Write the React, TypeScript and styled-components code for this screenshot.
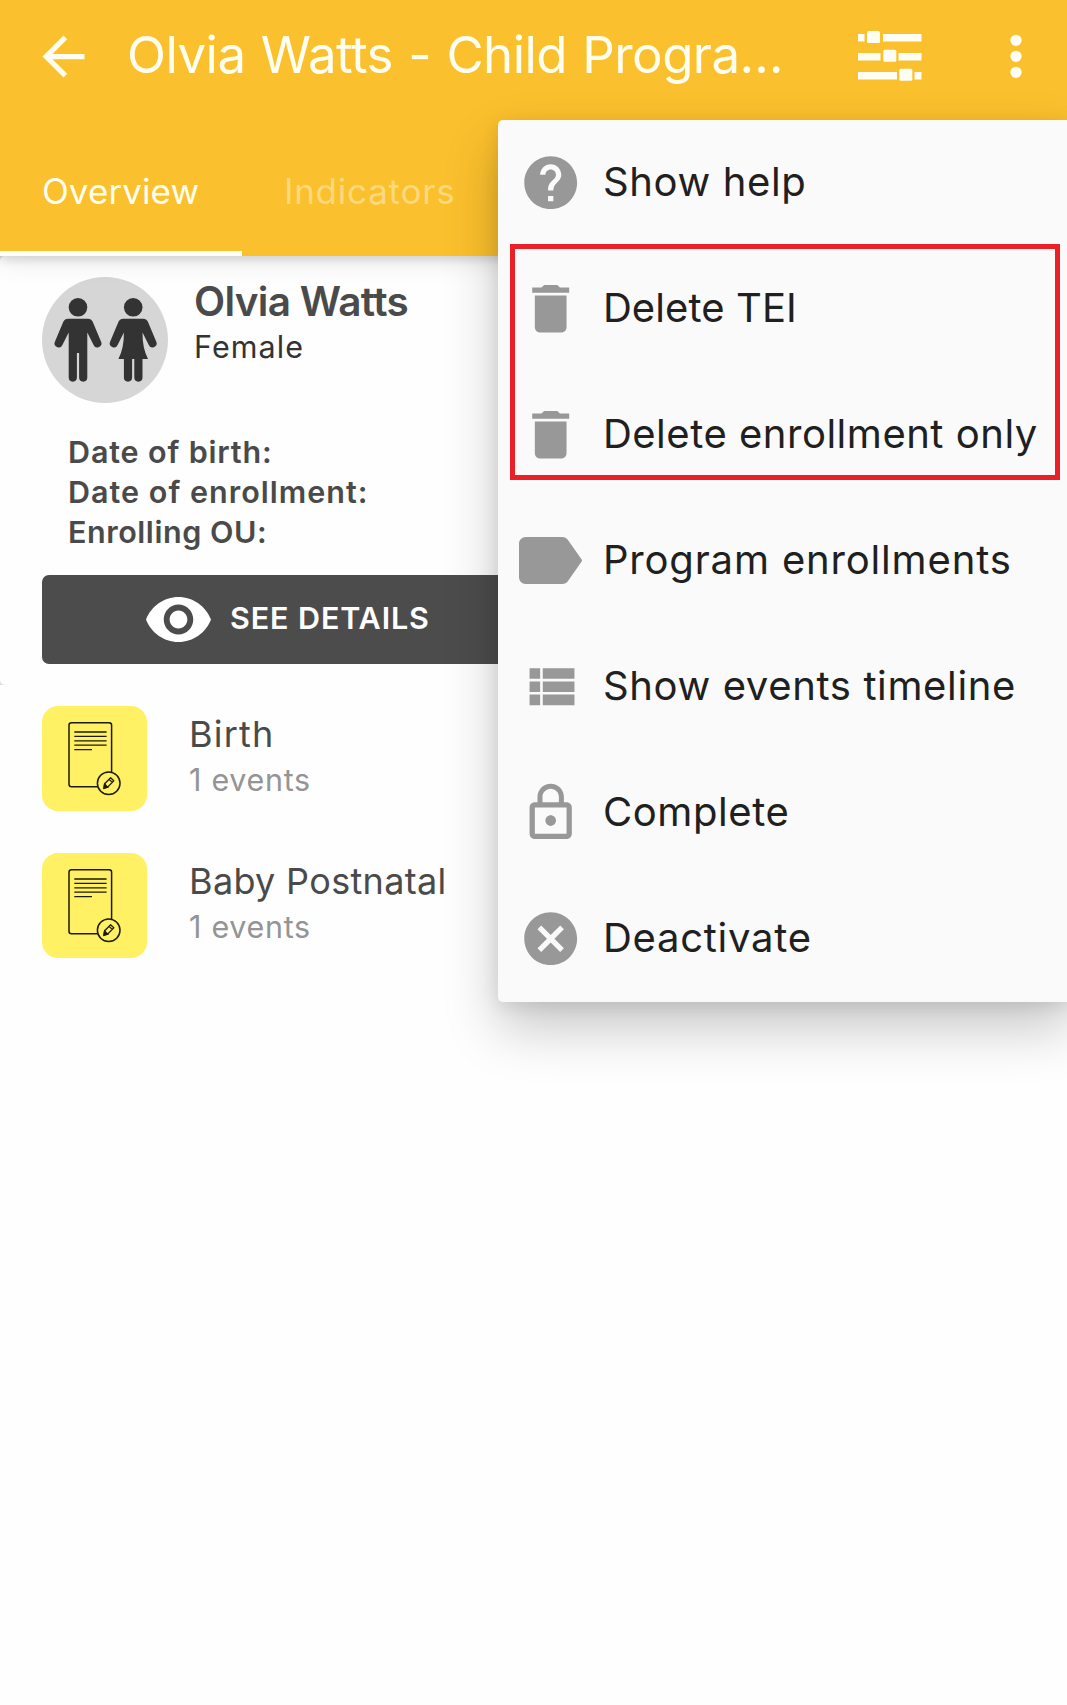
import React from 'react';
import styled, { createGlobalStyle, css } from 'styled-components';

const GlobalStyle = createGlobalStyle`
  *, *::before, *::after { box-sizing: border-box; }
  body {
    margin: 0;
    background: #fefefe;
    font-family: Inter, Roboto, 'Liberation Sans', sans-serif;
    overflow: hidden;
  }
`;

const Screen = styled.div`
  position: relative;
  display: flex;
  flex-direction: column;
  width: 1067px;
  height: 1705px;
  overflow: hidden;
  background: #fefefe;
`;

const Label = styled.span<{ $track?: number }>`
  letter-spacing: ${({ $track = 0 }) => $track}px;
  white-space: nowrap;
`;

/* ---------- header ---------- */

const Header = styled.header`
  position: relative;
  z-index: 1;
  flex: none;
  height: 256px;
  display: flex;
  flex-direction: column;
  background: #fbc02d;
  color: #fffef0;
  box-shadow: 0 4px 9px rgba(0, 0, 0, 0.13), 0 8px 24px rgba(0, 0, 0, 0.07);
`;

const Toolbar = styled.div`
  display: flex;
  align-items: center;
  height: 112px;
  padding: 0 19px 0 31px;
`;

const IconButton = styled.button<{ $spaceBefore?: number }>`
  display: flex;
  align-items: center;
  justify-content: center;
  flex: none;
  width: 64px;
  height: 64px;
  margin-left: ${({ $spaceBefore = 0 }) => $spaceBefore}px;
  padding: 0;
  border: 0;
  background: none;
  color: inherit;
`;

const Title = styled.h1`
  flex: 1;
  margin: 0;
  padding: 0 0 3px 32px;
  font-size: 51px;
  font-weight: 400;
  line-height: 64px;
  word-spacing: 1.5px;
`;

const TabBar = styled.nav`
  display: flex;
  flex: 1;
`;

const Tab = styled.div<{ $active?: boolean }>`
  display: flex;
  align-items: center;
  height: 144px;
  padding: 13px 43px 0 42px;
  font-size: 35px;
  line-height: 44px;
  color: rgba(255, 254, 240, 0.42);
  ${({ $active }) =>
    $active &&
    css`
      width: 242px;
      color: #fffef0;
      border-bottom: 5px solid #fffffa;
      padding-top: 18px;
    `}
`;

/* ---------- person card ---------- */

const CardBackdrop = styled.div`
  flex: none;
  background: #dcdcdc;
`;

const Card = styled.section`
  height: 429px;
  padding: 21px 42px 0;
  border-radius: 5px;
  background: #fefefe;
`;

const Person = styled.div`
  display: flex;
  gap: 26px;
  height: 155px;
`;

const Avatar = styled.svg`
  flex: none;
  width: 126px;
  height: 126px;
  border-radius: 50%;
  background: #d6d6d6;
`;

const PersonText = styled.div`
  display: flex;
  flex-direction: column;
`;

const Name = styled.div`
  padding-top: 1px;
  color: #4a4a4a;
  font-size: 40.5px;
  font-weight: 600;
  line-height: 48px;
`;

const Gender = styled.div`
  color: #333;
  font-size: 30.5px;
  line-height: 41px;
`;

const Facts = styled.div`
  display: flex;
  flex-direction: column;
  padding-left: 26px;
  height: 143px;
  color: #4a4a4a;
  font-size: 30.5px;
  font-weight: 600;
  line-height: 40px;
`;

const DetailsButton = styled.button`
  display: flex;
  align-items: center;
  gap: 19px;
  width: 100%;
  height: 89px;
  padding: 0 0 0 104px;
  border: 0;
  border-radius: 7px;
  background: #4c4c4c;
  color: #fff;
  font: 600 30.5px/40px Inter, Roboto, 'Liberation Sans', sans-serif;

  svg {
    flex: none;
  }
  span {
    padding-bottom: 4px;
  }
`;

/* ---------- stage list ---------- */

const StageList = styled.ul`
  display: flex;
  flex-direction: column;
  gap: 42px;
  margin: 0;
  padding: 21px 42px;
  list-style: none;
`;

const Stage = styled.li`
  display: flex;
  align-items: center;
  gap: 42px;
  height: 105px;
`;

const StageTile = styled.svg`
  flex: none;
  width: 105px;
  height: 105px;
  border-radius: 16px;
  background: #fff163;
`;

const StageText = styled.div`
  display: flex;
  flex-direction: column;
  padding-bottom: 4px;
`;

const StageName = styled.div`
  color: #4a4a4a;
  font-size: 36px;
  line-height: 46px;
`;

const StageCount = styled.div`
  color: #949494;
  font-size: 30.5px;
  line-height: 46px;
`;

/* ---------- overflow menu ---------- */

const Menu = styled.div`
  position: absolute;
  z-index: 2;
  top: 120px;
  left: 498px;
  right: -6px;
  display: flex;
  flex-direction: column;
  border-radius: 5px;
  background: #fafafa;
  box-shadow: 0 4px 18px rgba(0, 0, 0, 0.09), 0 26px 54px rgba(0, 0, 0, 0.22);
`;

const MenuItem = styled.div`
  display: flex;
  align-items: center;
  height: 126px;
  padding: 0 0 1px 21px;
  color: #202020;
  font-size: 40px;
  line-height: 52px;

  svg {
    flex: none;
    color: #989898;
  }
  span {
    padding: 0 0 1px 20.5px;
  }
`;

const Highlight = styled.div`
  position: absolute;
  top: 124px;
  left: 12px;
  width: 550px;
  height: 236px;
  border: 5px solid #ea1f27;
`;

/* ---------- drawings ---------- */

const Glyph = ({ d, size = 63.4 }: { d: string; size?: number }) => (
  <svg width={size} height={size} viewBox="0 0 24 24" fill="currentColor">
    <path d={d} />
  </svg>
);

const paths = {
  back: 'M20 11H7.83l5.59-5.59L12 4l-8 8 8 8 1.41-1.41L7.83 13H20v-2z',
  help: 'M12 2C6.48 2 2 6.48 2 12s4.48 10 10 10 10-4.48 10-10S17.52 2 12 2zm1 17h-2v-2h2v2zm2.07-7.75l-.9.92C13.45 12.9 13 13.5 13 15h-2v-.5c0-1.1.45-2.1 1.17-2.83l1.24-1.26c.37-.36.59-.86.59-1.41 0-1.1-.9-2-2-2s-2 .9-2 2H8c0-2.21 1.79-4 4-4s4 1.79 4 4c0 .88-.36 1.68-.93 2.25z',
  trash: 'M6 19c0 1.1.9 2 2 2h8c1.1 0 2-.9 2-2V7H6v12zM19 4h-3.5l-1-1h-5l-1 1H5v2h14V4z',
  list: 'M4 14h4v-4H4v4zm0 5h4v-4H4v4zM4 9h4V5H4v4zm5 5h12v-4H9v4zm0 5h12v-4H9v4zM9 5v4h12V5H9z',
  lock: 'M12 17c1.1 0 2-.9 2-2s-.9-2-2-2-2 .9-2 2 .9 2 2 2zm6-9h-1V6c0-2.76-2.24-5-5-5S7 3.24 7 6v2H6c-1.1 0-2 .9-2 2v10c0 1.1.9 2 2 2h12c1.1 0 2-.9 2-2V10c0-1.1-.9-2-2-2zM8.9 6c0-1.71 1.39-3.1 3.1-3.1s3.1 1.39 3.1 3.1v2H8.9V6zM18 20H6V10h12v10z',
  cancel:
    'M12 2C6.47 2 2 6.47 2 12s4.47 10 10 10 10-4.47 10-10S17.53 2 12 2zm5 13.59L15.59 17 12 13.41 8.41 17 7 15.59 10.59 12 7 8.41 8.41 7 12 10.59 15.59 7 17 8.41 13.41 12 17 15.59z',
};

const TagIcon = () => (
  <svg width="63.4" height="47" viewBox="3 5 19 14" preserveAspectRatio="none" fill="currentColor">
    <path d="M17.63 5.84C17.27 5.33 16.67 5 16 5H5C3.9 5 3 5.9 3 7v10c0 1.1.9 2 2 2h11c.67 0 1.27-.33 1.63-.84L22 12l-4.37-6.16z" />
  </svg>
);

const SlidersIcon = () => (
  <svg width="64" height="50" viewBox="0 0 64 50" fill="#fffef5">
    <path d="M0 3h6.500v7.500H0zM25 3h38.500v7.500H25zM0 22h22.500v7.500H0zM40.500 22h23v7.500h-23zM0 41h39v7.500H0zM56.500 41h7v7.500h-7z" />
    <rect x="9" y="0" width="13" height="12" rx="1.500" />
    <rect x="25.300" y="18.800" width="13" height="12" rx="1.500" />
    <rect x="41.300" y="37.700" width="13" height="12" rx="1.500" />
  </svg>
);

const DotsIcon = () => (
  <svg width="12" height="46" viewBox="0 0 12 46" fill="#fffef5">
    <circle cx="6" cy="7.300" r="5.600" />
    <circle cx="6" cy="23.300" r="5.600" />
    <circle cx="6" cy="39.300" r="5.600" />
  </svg>
);

const EyeIcon = () => (
  <svg width="65" height="45" viewBox="1 4.500 22 15" preserveAspectRatio="none" fill="currentColor">
    <path d="M12 4.500C7 4.500 2.730 7.610 1 12c1.730 4.390 6 7.500 11 7.500s9.270-3.110 11-7.500c-1.730-4.390-6-7.500-11-7.500zM12 17c-2.760 0-5-2.240-5-5s2.240-5 5-5 5 2.240 5 5-2.240 5-5 5zm0-8c-1.660 0-3 1.340-3 3s1.340 3 3 3 3-1.340 3-3-1.340-3-3-3z" />
  </svg>
);

const PeopleAvatar = () => (
  <Avatar viewBox="0 0 126 126" fill="#333">
    <circle cx="36" cy="30.300" r="9.300" />
    <path d="M26 41.700H46Q49.300 41.700 50.600 44.600L59 64.500A4 4 0 0 1 51.600 68L45.300 55.500V100.600A4.100 4.100 0 0 1 37.100 100.600V76H34.900V100.600A4.100 4.100 0 0 1 26.700 100.600V55.500L20.400 68A4 4 0 0 1 13 64.500L21.400 44.600Q22.700 41.700 26 41.700Z" />
    <circle cx="91.200" cy="30.300" r="9.300" />
    <path d="M81.200 41.700H101.200Q104.500 41.700 105.800 44.600L114.200 64.500A4 4 0 0 1 106.800 68L100.500 55.500Q100.300 71 106 82H100.500V100.600A4.100 4.100 0 0 1 92.300 100.600V82H90.100V100.600A4.100 4.100 0 0 1 81.900 100.600V82H76.400Q82.100 71 81.900 55.500L75.600 68A4 4 0 0 1 68.200 64.500L76.600 44.600Q77.900 41.700 81.200 41.700Z" />
  </Avatar>
);

const FormTile = () => (
  <StageTile viewBox="0 0 105 105" fill="none" stroke="#1c1a08" strokeWidth="1.500">
    <rect x="27" y="16.700" width="42.600" height="64" rx="2.500" />
    <path d="M32.300 26h32.300M32.300 30.400h32.300M32.300 34.800h32.300M32.300 39.200h32.300M32.300 43.600h17.700" strokeWidth="1.300" />
    <circle cx="66.700" cy="77.200" r="11.300" fill="#fff163" />
    <path d="M62 82.200l.7-4.400 5.900-6 3.200 3-5.900 6.100zM67 73.300l3.300 3.100" strokeWidth="1.300" strokeLinejoin="round" />
    <path d="M62 82.200l.6-4 2.900 2.900z" fill="#1c1a08" />
  </StageTile>
);

/* ---------- data ---------- */

const facts = [
  { text: 'Date of birth:', track: 0.85 },
  { text: 'Date of enrollment:', track: 1.02 },
  { text: 'Enrolling OU:', track: 0.55 },
];

const stages = [
  { name: 'Birth', track: 1.2, count: '1 events' },
  { name: 'Baby Postnatal', track: 0.33, count: '1 events' },
];

const menuItems = [
  { text: 'Show help', track: 0.65, icon: <Glyph d={paths.help} /> },
  { text: 'Delete TEI', track: 0.1, icon: <Glyph d={paths.trash} /> },
  { text: 'Delete enrollment only', track: 0.52, icon: <Glyph d={paths.trash} /> },
  { text: 'Program enrollments', track: 0.84, icon: <TagIcon /> },
  { text: 'Show events timeline', track: 0.64, icon: <Glyph d={paths.list} /> },
  { text: 'Complete', track: 0.6, icon: <Glyph d={paths.lock} /> },
  { text: 'Deactivate', track: 0.75, icon: <Glyph d={paths.cancel} /> },
];

export default function App() {
  return (
    <>
      <GlobalStyle />
      <Screen>
        <Header>
          <Toolbar>
            <IconButton aria-label="Back">
              <Glyph d={paths.back} size={63} />
            </IconButton>
            <Title>
              <Label $track={-0.55}>Olvia Watts - Child Progra…</Label>
            </Title>
            <IconButton aria-label="Filters">
              <SlidersIcon />
            </IconButton>
            <IconButton $spaceBefore={62} aria-label="More options">
              <DotsIcon />
            </IconButton>
          </Toolbar>
          <TabBar>
            <Tab $active>
              <Label $track={0.1}>Overview</Label>
            </Tab>
            <Tab>
              <Label $track={0.77}>Indicators</Label>
            </Tab>
          </TabBar>
        </Header>

        <CardBackdrop>
          <Card>
            <Person>
              <PeopleAvatar />
              <PersonText>
                <Name>
                  <Label $track={-0.68}>Olvia Watts</Label>
                </Name>
                <Gender>
                  <Label $track={1.1}>Female</Label>
                </Gender>
              </PersonText>
            </Person>
            <Facts>
              {facts.map((fact) => (
                <Label key={fact.text} $track={fact.track}>
                  {fact.text}
                </Label>
              ))}
            </Facts>
            <DetailsButton>
              <EyeIcon />
              <Label $track={0.88}>SEE DETAILS</Label>
            </DetailsButton>
          </Card>
        </CardBackdrop>

        <StageList>
          {stages.map((stage) => (
            <Stage key={stage.name}>
              <FormTile />
              <StageText>
                <StageName>
                  <Label $track={stage.track}>{stage.name}</Label>
                </StageName>
                <StageCount>
                  <Label $track={0.7}>{stage.count}</Label>
                </StageCount>
              </StageText>
            </Stage>
          ))}
        </StageList>

        <Menu>
          {menuItems.map((item) => (
            <MenuItem key={item.text}>
              {item.icon}
              <Label $track={item.track}>{item.text}</Label>
            </MenuItem>
          ))}
          <Highlight />
        </Menu>
      </Screen>
    </>
  );
}
